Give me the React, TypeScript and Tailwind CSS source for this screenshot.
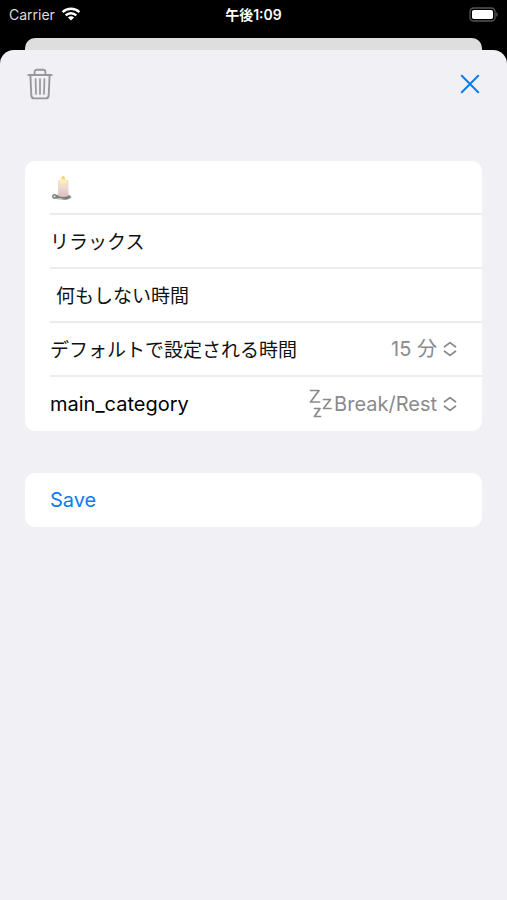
import React, { useState } from "react";

const field = "w-full bg-transparent text-[19px] text-[#111] outline-none";
const row = "flex h-[54px] items-center pr-[25px]";
const value =
  "appearance-none bg-transparent pr-5 text-right text-[20px] text-[#8a8a8e] outline-none field-sizing-content";

function StatusBar() {
  return (
    <header className="grid h-7 grid-cols-3 items-center px-[9px] text-[14px] text-white">
      <div className="flex items-center gap-1.5 text-[#dcdcdc]">
        <span>Carrier</span>
        <svg width="20" height="14" viewBox="0 0 20 14" fill="none" stroke="#fff" strokeWidth="2.4">
          <path d="M1.6 5.2a12 12 0 0 1 16.8 0" />
          <path d="M4.7 8.4a7.5 7.5 0 0 1 10.6 0" />
          <path d="M10 13.6 6.9 10.5a4.4 4.4 0 0 1 6.2 0z" fill="#fff" stroke="none" />
        </svg>
      </div>
      <div className="text-center font-semibold">午後1:09</div>
      <div className="flex justify-end">
        <svg width="29" height="15" viewBox="0 0 29 15">
          <rect x="1" y="1" width="25" height="13" rx="3.6" fill="none" stroke="#555" strokeWidth="1.3" />
          <rect x="3" y="3" width="21" height="9" rx="1.8" fill="#fff" />
          <path d="M27.4 5.2c1.7.6 1.7 4 0 4.6z" fill="#666" />
        </svg>
      </div>
    </header>
  );
}

function TrashIcon() {
  return (
    <svg
      width="26"
      height="32"
      viewBox="0 0 26 32"
      fill="none"
      stroke="#98989c"
      strokeWidth="1.9"
      strokeLinecap="round"
      strokeLinejoin="round"
    >
      <path d="M1.4 7h23.2" />
      <path d="M7.6 7V4.2c0-1.500.9-2.400 2.400-2.400h6c1.500 0 2.400.9 2.400 2.400V7" />
      <path d="M3.400 7l.9 20.400c.1 1.900 1.200 3 3.100 3h11.200c1.900 0 3-1.100 3.100-3L22.600 7" />
      <path d="M8.600 11l.4 15M13 11v15M17.400 11l-.4 15" strokeWidth="1.7" />
    </svg>
  );
}

function CandleIcon() {
  return (
    <svg width="24" height="28" viewBox="0 0 24 28">
      <defs>
        <linearGradient id="wax" x1="0" y1="0" x2="0" y2="1">
          <stop offset="0" stopColor="#fbe3b0" />
          <stop offset="0.4" stopColor="#f0dcd5" />
          <stop offset="1" stopColor="#d6bfc0" />
        </linearGradient>
        <linearGradient id="plate" x1="0" y1="0" x2="1" y2="0">
          <stop offset="0" stopColor="#777" />
          <stop offset="0.35" stopColor="#d6d6d6" />
          <stop offset="0.7" stopColor="#777" />
          <stop offset="1" stopColor="#aaa" />
        </linearGradient>
      </defs>
      <ellipse cx="13" cy="24" rx="8.5" ry="3" fill="url(#plate)" />
      <ellipse cx="13" cy="23.4" rx="7" ry="2" fill="#777" />
      <circle cx="4.500" cy="23.400" r="1.800" fill="#ddd" stroke="#777" strokeWidth="1.300" />
      <path d="M8 7.500q5-1.800 10.500 0V23q-5.200 2.200-10.500 0z" fill="url(#wax)" />
      <path d="M13.200 2.400c2.600 2.400 2.700 5 0 5.400-2.700-.4-2.600-3 0-5.400z" fill="#f6d072" />
      <ellipse cx="13.200" cy="8.300" rx="3.600" ry="2.200" fill="#fdeeb5" />
    </svg>
  );
}

function ZzzIcon() {
  return (
    <svg
      width="24"
      height="30"
      viewBox="0 0 24 30"
      fill="none"
      stroke="#8a8a8e"
      strokeWidth="1.7"
      strokeLinecap="round"
      strokeLinejoin="round"
      aria-hidden="true"
    >
      <path d="M2.500 1.500h8.500L2.500 13h9" />
      <path d="M15.500 10.500h7l-7 9h7.500" />
      <path d="M6.500 19.500H12L6.500 27.500h6" />
    </svg>
  );
}

function Chevrons() {
  return (
    <svg
      className="pointer-events-none absolute right-0"
      width="14"
      height="16"
      viewBox="0 0 14 16"
      fill="none"
      stroke="#8a8a8e"
      strokeWidth="1.7"
      strokeLinecap="round"
      strokeLinejoin="round"
    >
      <path d="M1.500 5.800 7 1.600l5.500 4.200M1.500 10.200 7 14.400l5.500-4.200" />
    </svg>
  );
}

export default function App() {
  const [title, setTitle] = useState("リラックス");
  const [memo, setMemo] = useState("何もしない時間");
  const [minutes, setMinutes] = useState("15");
  const [category, setCategory] = useState("break");

  return (
    <div className="flex min-h-screen flex-col bg-black font-[Inter,'Noto_Sans_CJK_JP',sans-serif]">
      <StatusBar />

      {/* 後ろのシート */}
      <div className="mx-[25px] mt-2.5 h-3 rounded-t-[10px] bg-[#dedede]" />

      <main className="grow rounded-t-[14px] bg-[#f0f0f5] px-[25px]">
        <div className="flex h-[68px] items-center justify-between px-0.5">
          <button type="button" aria-label="削除">
            <TrashIcon />
          </button>
          <button type="button" aria-label="閉じる">
            <svg width="20" height="20" viewBox="0 0 20 20" stroke="#0a7cf5" strokeWidth="2" strokeLinecap="round">
              <path d="M1.800 1.800l16.400 16.400M18.200 1.800 1.800 18.200" />
            </svg>
          </button>
        </div>

        <form className="mt-[43px]" onSubmit={(e) => e.preventDefault()}>
          <div className="divide-y-2 divide-[#ececee] rounded-[10px] bg-white pl-[25px]">
            <div className={row}>
              <button type="button" aria-label="アイコン">
                <CandleIcon />
              </button>
            </div>
            <div className={`${row} pt-1`}>
              <input
                className={field}
                aria-label="タイトル"
                value={title}
                onChange={(e) => setTitle(e.target.value)}
              />
            </div>
            <div className={`${row} pt-1`}>
              <input
                className={`${field} pl-1.5`}
                aria-label="メモ"
                value={memo}
                onChange={(e) => setMemo(e.target.value)}
              />
            </div>
            <div className={`${row} justify-between`}>
              <label htmlFor="minutes" className="pt-1 text-[19px] text-[#111]">
                デフォルトで設定される時間
              </label>
              <div className="relative flex items-center">
                <select
                  id="minutes"
                  className={value}
                  value={minutes}
                  onChange={(e) => setMinutes(e.target.value)}
                >
                  <option value="15">15 分</option>
                  <option value="30">30 分</option>
                </select>
                <Chevrons />
              </div>
            </div>
            <div className={`${row} justify-between`}>
              <label htmlFor="category" className="text-[20px]">
                main_category
              </label>
              <div className="relative flex items-center gap-0.5">
                <ZzzIcon />
                <select
                  id="category"
                  className={value}
                  value={category}
                  onChange={(e) => setCategory(e.target.value)}
                >
                  <option value="break">Break/Rest</option>
                </select>
                <Chevrons />
              </div>
            </div>
          </div>

          <button
            type="submit"
            className="mt-[42px] h-[54px] w-full rounded-[10px] bg-white pl-[25px] text-left text-[20px] text-[#0a7cf5]"
          >
            Save
          </button>
        </form>
      </main>
    </div>
  );
}
